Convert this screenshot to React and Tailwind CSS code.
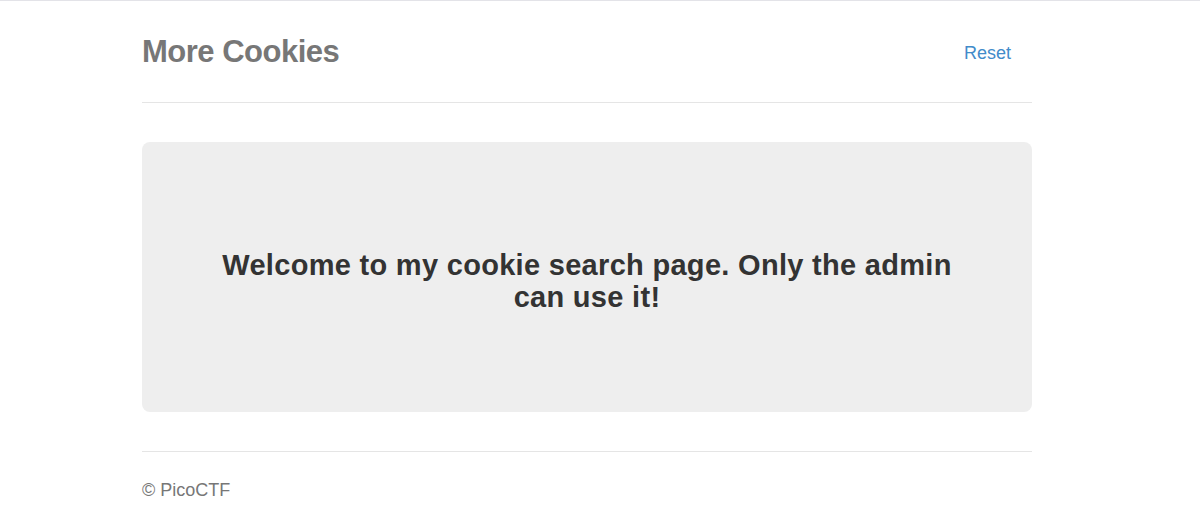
import React from 'react';

const App = () => {
  return (
    <div className="min-h-[531px] bg-white border-t border-[#e3e3e8] font-['Liberation_Sans',Arial,sans-serif]">
      <div className="ml-[142px] w-[890px]">
        {/* header */}
        <div className="flex items-center justify-between pt-[33px] pb-[32px] border-b border-[#e5e5e5]">
          <h3 className="text-[31px] leading-[36px] font-bold text-[#777] tracking-[-0.5px]">More Cookies</h3>
          <a href="#" className="text-[18px] leading-[24px] text-[#428bca] pr-[21px] mt-[2px]">Reset</a>
        </div>

        {/* jumbotron */}
        <div className="mt-[39px] h-[270px] rounded-[8px] bg-[#eeeeee] px-[65px] pt-[107px] text-center">
          <h1 className="text-[29px] leading-[32px] font-bold text-[#333] tracking-[0.3px]">
            Welcome to my cookie search page. Only the admin can use it!
          </h1>
        </div>

        {/* footer */}
        <div className="mt-[39px] border-t border-[#e5e5e5] pt-[26px]">
          <p className="text-[18px] leading-[24px] text-[#777]">© PicoCTF</p>
        </div>
      </div>
    </div>
  );
};

export default App;
